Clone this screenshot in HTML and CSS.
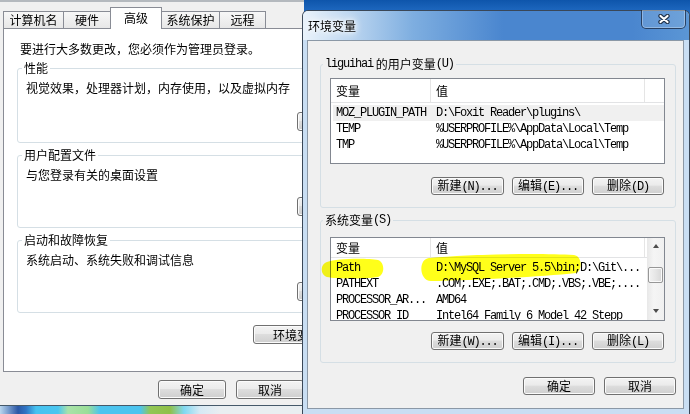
FILE: index.html
```html
<!DOCTYPE html>
<html lang="zh-CN">
<head>
    <meta charset="UTF-8">
    <title>环境变量</title>
    <link rel="stylesheet" href="styles.css">
</head>
<body>
 <section class="syswin">
    <div class="tabs">
        <div class="tab t1">计算机名</div>
        <div class="tab t2">硬件</div>
        <div class="tab t3 active">高级</div>
        <div class="tab t4">系统保护</div>
        <div class="tab t5">远程</div>
    </div>
    <div class="panel">
        <p class="note">要进行大多数更改，您必须作为管理员登录。</p>

        <fieldset class="group g1">
            <legend>性能</legend>
            <p>视觉效果，处理器计划，内存使用，以及虚拟内存</p>
            <button class="btn set">设置(S)...</button>
        </fieldset>

        <fieldset class="group">
            <legend>用户配置文件</legend>
            <p>与您登录有关的桌面设置</p>
            <button class="btn set">设置(E)...</button>
        </fieldset>

        <fieldset class="group">
            <legend>启动和故障恢复</legend>
            <p>系统启动、系统失败和调试信息</p>
            <button class="btn set">设置(T)...</button>
        </fieldset>

        <div class="envrow">
            <button class="btn envbtn">环境变量(N)...</button>
        </div>
    </div>
    <div class="okrow">
        <button class="btn">确定</button>
        <button class="btn">取消</button>
    </div>
    <div class="strip"></div>
 </section>

 <section class="envwin">
    <div class="titlebar">
        <span class="title">环境变量</span>
        <div class="close">
            <svg width="12" height="10" viewBox="0 0 12 10">
                <path d="M2.5 2 L9.5 8 M9.5 2 L2.5 8" stroke="#23354d" stroke-width="4.4" stroke-linecap="round"/>
                <path d="M2.5 2 L9.5 8 M9.5 2 L2.5 8" stroke="#fff" stroke-width="2.2" stroke-linecap="round"/>
            </svg>
        </div>
    </div>
    <div class="client">

        <fieldset class="vgroup user">
            <legend><span class="mono">liguihai</span>&nbsp;的用户变量<span class="mono">(U)</span></legend>
            <div class="list l1">
                <div class="lmain">
                    <div class="lhead">
                        <span class="c1">变量</span><span class="c2">值</span><span class="cfill"></span>
                    </div>
                    <div class="lbody">
                        <div class="row sel"><span class="c1 mono">MOZ_PLUGIN_PATH</span><span class="c2 mono">D:\Foxit Reader\plugins\</span></div>
                        <div class="row"><span class="c1 mono">TEMP</span><span class="c2 mono">%USERPROFILE%\AppData\Local\Temp</span></div>
                        <div class="row"><span class="c1 mono">TMP</span><span class="c2 mono">%USERPROFILE%\AppData\Local\Temp</span></div>
                    </div>
                </div>
            </div>
            <div class="btnrow">
                <button class="btn wide">新建<span class="mono">(N)...</span></button>
                <button class="btn">编辑<span class="mono">(E)...</span></button>
                <button class="btn">删除<span class="mono">(D)</span></button>
            </div>
        </fieldset>

        <fieldset class="vgroup sys">
            <legend>系统变量<span class="mono">(S)</span></legend>
            <div class="list l2">
                <div class="lmain">
                    <div class="lhead">
                        <span class="c1">变量</span><span class="c2">值</span>
                    </div>
                    <div class="lbody">
                        <div class="row"><span class="c1 mono">Path</span><span class="c2 mono">D:\MySQL Server 5.5\bin;D:\Git\...</span></div>
                        <div class="row"><span class="c1 mono">PATHEXT</span><span class="c2 mono">.COM;.EXE;.BAT;.CMD;.VBS;.VBE;....</span></div>
                        <div class="row"><span class="c1 mono">PROCESSOR_AR...</span><span class="c2 mono">AMD64</span></div>
                        <div class="row"><span class="c1 mono">PROCESSOR_ID</span><span class="c2 mono">Intel64 Family 6 Model 42 Stepp</span></div>
                    </div>
                </div>
                <div class="sbar">
                    <div class="arrow up"></div>
                    <div class="thumb"></div>
                    <div class="arrow down"></div>
                </div>
            </div>
            <div class="btnrow">
                <button class="btn wide">新建<span class="mono">(W)...</span></button>
                <button class="btn">编辑<span class="mono">(I)...</span></button>
                <button class="btn">删除<span class="mono">(L)</span></button>
            </div>
        </fieldset>

        <div class="okrow2">
            <button class="btn">确定</button>
            <button class="btn">取消</button>
        </div>
    </div>
 </section>

 <!-- highlighter marks drawn over the Path row -->
 <svg class="marks" width="690" height="414" viewBox="0 0 690 414">
    <path d="M327 262 C337 258 368 258 378 260 C385 262 385 275 378 277 C365 279 336 279 327 277 C320 275 320 264 327 262 Z" fill="#ffff1a"/>
    <path d="M429 258 C470 254 540 253 574 255 C582 256 583 270 576 273 C540 277 472 280 431 281 C419 281 418 259 429 258 Z" fill="#ffff1a"/>
 </svg>
</body>
</html>
```

FILE: styles.css
```css
*{
    margin: 0;
    padding: 0;
    box-sizing: border-box;
}

body{
    width: 690px;
    height: 414px;
    overflow: hidden;
    position: relative;
    background: linear-gradient(#0e55ab, #1d66bd 10px);
    font-family: "Noto Sans CJK SC", "Liberation Sans", sans-serif;
    font-size: 12px;
    color: #000;
}

.mono{
    font-family: "Liberation Mono", "Noto Sans CJK SC", monospace;
    letter-spacing: -1.2px;
}

/* ---------- back window: system properties ---------- */

.syswin{
    position: absolute;
    left: 0;
    top: 0;
    width: 304px;
    height: 414px;
    overflow: hidden;
    background-color: #f0f0f0;
    border-top: 2px solid #b4b9be;
    padding-top: 5px;
}

.tabs{
    display: flex;
    align-items: flex-end;
    height: 21px;
    padding-left: 3px;
    position: relative;
    z-index: 1;
}

.tab{
    height: 17px;
    line-height: 16px;
    text-align: center;
    border: 1px solid #898c95;
    border-bottom: none;
    margin-right: -1px;
    background: linear-gradient(#f7f7f7, #e7e7e7);
    flex-shrink: 0;
}

.t1{ width: 61px; }
.t2{ width: 48px; }
.t3{ width: 52px; }
.t4{ width: 59px; }
.t5{ width: 47px; }

.tab.active{
    height: 22px;
    line-height: 19px;
    background: #fff;
    margin-bottom: -1px;
    position: relative;
    z-index: 2;
}

.panel{
    margin-left: 3px;
    width: 400px;
    height: 344px;
    background-color: #fff;
    border: 1px solid #898c95;
}

.note{
    margin: 13px 0 0 16px;
    line-height: 14px;
}

.group{
    margin: 5px 0 0 13px;
    width: 364px;
    height: 80px;
    padding: 0 4px 11px 4px;
    border: 1px solid #d5dfe5;
    border-radius: 3px;
    display: flex;
    flex-direction: column;
}

.group.g1{
    height: 82px;
}

.group legend{
    padding: 0 2px;
    line-height: 14px;
}

.group p{
    margin-top: 6px;
    padding-left: 4px;
    line-height: 14px;
}

.btn{
    font: inherit;
    color: #000;
    width: 72px;
    height: 18px;
    line-height: 14px;
    border: 1px solid #707070;
    border-radius: 3px;
    background: linear-gradient(#f3f3f3 0%, #ebebeb 45%, #dddddd 50%, #cfcfcf 100%);
    box-shadow: inset 0 0 0 1px #fbfbfb;
}

.btn.set{
    margin-top: auto;
    align-self: flex-end;
    margin-right: 7px;
    height: 19px;
}

.envrow{
    margin-top: 12px;
    padding-left: 249px;
}

.envbtn{
    width: 120px;
    height: 19px;
    text-align: left;
    padding-left: 19px;
}

.okrow{
    display: flex;
    gap: 10px;
    margin-top: 8px;
    padding-left: 158px;
}

.okrow .btn{
    height: 19px;
}

.strip{
    margin-top: 6px;
    height: 9px;
    border-top: 1px solid #45596a;
    background: linear-gradient(to right,
        #b9d6ee 0px, #2b58a6 18px, #2f74c4 26px, #46c2f0 36px, #4ac6f0 58px,
        #a9e2a9 68px, #9ade98 88px, #4cc4ef 100px, #4cc4ef 140px,
        #92c655 150px, #8fc049 170px, #80d8f1 184px, #d6e9f4 200px, #e9eef1 220px, #e9eef1 100%);
}

/* ---------- front window: environment variables ---------- */

.envwin{
    position: absolute;
    left: 302px;
    top: 10px;
    width: 388px;
    height: 406px;
    z-index: 2;
    border: 1px solid rgba(22, 32, 48, 0.8);
    border-radius: 6px 6px 0 0;
    padding: 0 5px 0 4px;
    background-color: #c9def3;
}

.titlebar{
    height: 29px;
    display: flex;
    margin: 0 -5px 0 -4px;
    padding: 0 3px 0 5px;
    border-radius: 5px 5px 0 0;
    background-color: #4f8ad0;
    background-image: linear-gradient(to right, #eaf3fb 0px, #c4dbf2 40px, #7eaee0 110px, #4a86cf 200px, #4a86cf 330px, #5b96d5 386px);
}

.title{
    line-height: 29px;
    text-shadow: 0 0 4px #fff, 0 0 8px #fff, 0 0 10px #fff;
}

.close{
    margin-left: auto;
    margin-top: -1px;
    width: 45px;
    height: 19px;
    border: 1px solid rgba(20, 35, 60, 0.75);
    border-top: none;
    border-radius: 0 0 5px 5px;
    background-color: rgba(255, 255, 255, 0.12);
    box-shadow: inset 0 0 0 1px rgba(255, 255, 255, 0.3);
    display: flex;
    align-items: center;
    justify-content: center;
}

.client{
    height: 369px;
    background-color: #f0f0f0;
    border: 1px solid #8b98a6;
    padding-left: 12px;
}

.vgroup{
    width: 356px;
    padding: 0 2px 12px 2px;
    border: 1px solid #d5dfe5;
    border-radius: 3px;
}

.vgroup.user{
    margin-top: 16px;
}

.vgroup.sys{
    margin-top: 5px;
}

.vgroup legend{
    padding: 0 2px;
    height: 14px;
    line-height: 14px;
    display: flex;
    align-items: center;
    white-space: nowrap;
}

.list{
    margin-left: 7px;
    width: 335px;
    background-color: #fff;
    border: 1px solid #828790;
    display: flex;
    overflow: hidden;
}

.l1{
    margin-top: 7px;
    height: 86px;
}

.l2{
    margin-top: 10px;
    height: 84px;
}

.lmain{
    flex: 1;
    overflow: hidden;
}

.lhead{
    display: flex;
    border-bottom: 1px solid #e2e3e5;
}

.l1 .lhead{
    height: 24px;
    line-height: 23px;
}

.l2 .lhead{
    height: 20px;
    line-height: 19px;
}

.lhead span{
    border-right: 1px solid #e5e5e5;
    flex-shrink: 0;
}

.c1{
    width: 100px;
    padding-left: 5px;
    flex-shrink: 0;
    white-space: nowrap;
    overflow: hidden;
}

.c2{
    width: 214px;
    padding-left: 5px;
    flex-shrink: 0;
    white-space: nowrap;
    overflow: hidden;
}

.lhead .cfill{
    width: 18px;
    border-right: none;
}

.lbody{
    margin-top: 2px;
}

.row{
    display: flex;
    height: 16px;
    line-height: 16px;
    white-space: nowrap;
}

.row.sel{
    background-color: #f0f0f0;
    margin-left: 2px;
}

.row.sel .c1{
    width: 98px;
    padding-left: 3px;
}

.sbar{
    width: 17px;
    flex-shrink: 0;
    background: linear-gradient(to right, #e8e8e8, #f5f5f5 40%, #f0f0f0);
    display: flex;
    flex-direction: column;
    align-items: center;
}

.arrow{
    width: 0;
    height: 0;
    border-left: 3.5px solid transparent;
    border-right: 3.5px solid transparent;
}

.arrow.up{
    margin-top: 6px;
    border-bottom: 4px solid #4d4d4d;
}

.arrow.down{
    margin-top: auto;
    margin-bottom: 7px;
    border-top: 4px solid #4d4d4d;
}

.thumb{
    margin-top: 19px;
    width: 15px;
    height: 16px;
    border: 1px solid #979797;
    border-radius: 2px;
    background: linear-gradient(to right, #f2f2f2, #e6e6e6 50%, #d7d7d7);
    box-shadow: inset 0 0 0 1px #fafafa;
}

.btnrow{
    display: flex;
    justify-content: flex-end;
    gap: 8px;
    margin-right: 9px;
}

.user .btnrow{
    margin-top: 13px;
}

.sys .btnrow{
    margin-top: 11px;
}

.btnrow .btn.wide{
    width: 73px;
}

.okrow2{
    display: flex;
    justify-content: flex-end;
    gap: 9px;
    margin-top: 14px;
    margin-right: 7px;
}

.marks{
    position: absolute;
    left: 0;
    top: 0;
    z-index: 5;
    pointer-events: none;
    mix-blend-mode: multiply;
}
```
